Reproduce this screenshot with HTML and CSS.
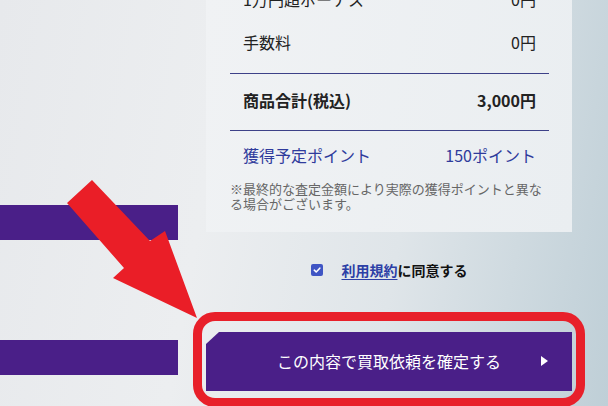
FILE: index.html
```html
<!DOCTYPE html>
<html lang="ja">
<head>
<meta charset="utf-8">
<link rel="stylesheet" href="styles.css">
</head>
<body>
<div class="page">
  <div class="side">
    <div class="bar bar-top"></div>
    <div class="bar bar-bottom"></div>
  </div>
  <div class="main">
    <div class="card">
      <div class="rows">
        <div class="row"><span>1万円超ボーナス</span><span>0円</span></div>
        <div class="row row-2"><span>手数料</span><span>0円</span></div>
      </div>
      <div class="divider d1"></div>
      <div class="rows">
        <div class="row total"><span>商品合計(税込)</span><span>3,000円</span></div>
      </div>
      <div class="divider d2"></div>
      <div class="rows">
        <div class="row points"><span>獲得予定ポイント</span><span>150ポイント</span></div>
      </div>
      <p class="note">※最終的な査定金額により実際の獲得ポイントと異なる場合がございます。</p>
    </div>
    <div class="agree">
      <span class="check">
        <svg viewBox="0 0 12 12" width="12" height="12"><path d="M3.3 6.2 L5.2 8 L8.8 4.2" fill="none" stroke="#fff" stroke-width="1.6" stroke-linecap="round" stroke-linejoin="round"/></svg>
      </span>
      <span class="agree-text"><a class="terms" href="#">利用規約</a>に同意する</span>
    </div>
    <div class="btn-wrap">
      <button class="submit">この内容で買取依頼を確定する<span class="tri"></span></button>
      <span class="highlight"></span>
    </div>
  </div>
  <svg class="arrow" width="608" height="406" viewBox="0 0 608 406">
    <polygon points="92,180 150,241 165,231 197,318 113,278 124,268 67,203" fill="#ea1e27"/>
  </svg>
</div>
</body>
</html>
```

FILE: styles.css
```css
* { box-sizing: border-box; }
html, body { margin: 0; padding: 0; }
body {
  font-family: "Noto Sans CJK JP", "Noto Sans", sans-serif;
  color: #222;
}
.page {
  position: relative;
  width: 608px;
  height: 406px;
  overflow: hidden;
  display: grid;
  grid-template-columns: 178px 366px;
  column-gap: 28px;
  background: linear-gradient(100deg, #e7e9ec 0%, #eceef0 35%, #dfe5e9 65%, #bfcfd7 100%);
}
.side { display: flex; flex-direction: column; }
.bar { height: 35px; background: #4a1f88; }
.bar-top { margin-top: 205px; }
.bar-bottom { margin-top: 100px; }

.main { display: flex; flex-direction: column; }
.card {
  margin-top: -13px;
  padding: 0 23px 21px 24px;
  background: linear-gradient(100deg, #f0f2f4 0%, #eaeef1 100%);
}
.rows { padding: 0 13px; }
.row {
  display: flex;
  justify-content: space-between;
  font-size: 16px;
  line-height: 24px;
  color: #222;
}
.row-2 { margin-top: 19px; }
.divider { height: 1px; background: #3d4188; }
.d1 { margin-top: 19px; }
.total { margin-top: 14px; font-weight: bold; }
.d2 { margin-top: 18px; }
.points { margin-top: 12px; color: #2f3b9c; }
.note {
  margin: 14px 0 0;
  font-size: 13px;
  line-height: 15px;
  color: #666;
}
.agree {
  margin-top: 28px;
  display: flex;
  justify-content: center;
  align-items: center;
  height: 20px;
}
.check {
  width: 12px;
  height: 12px;
  border-radius: 2px;
  background: #3f55c4;
  display: flex;
  margin-right: 19px;
  margin-top: -1px;
}
.agree-text { font-size: 14px; font-weight: bold; line-height: 20px; color: #111; }
.terms { color: #2c3fa6; text-decoration: underline; text-underline-offset: 3px; }

.btn-wrap { position: relative; margin-top: 52px; }
.submit {
  position: relative;
  display: block;
  width: 100%;
  height: 59px;
  border: 0;
  padding: 0;
  background: #4a1f88;
  color: #fff;
  font-family: "Noto Sans CJK JP", "Noto Sans", sans-serif;
  font-size: 16px;
  line-height: 59px;
  text-align: center;
  clip-path: polygon(13px 0, 100% 0, 100% 100%, 0 100%, 0 12px);
}
.tri {
  position: absolute;
  right: 24px;
  top: 24px;
  width: 0;
  height: 0;
  border-top: 5px solid transparent;
  border-bottom: 5px solid transparent;
  border-left: 7px solid #fff;
}
.highlight {
  position: absolute;
  left: -13px;
  right: -13px;
  top: -20px;
  bottom: -16px;
  border: 9px solid #e8202a;
  border-radius: 22px;
  pointer-events: none;
}
.arrow { position: absolute; left: 0; top: 0; pointer-events: none; }
```
